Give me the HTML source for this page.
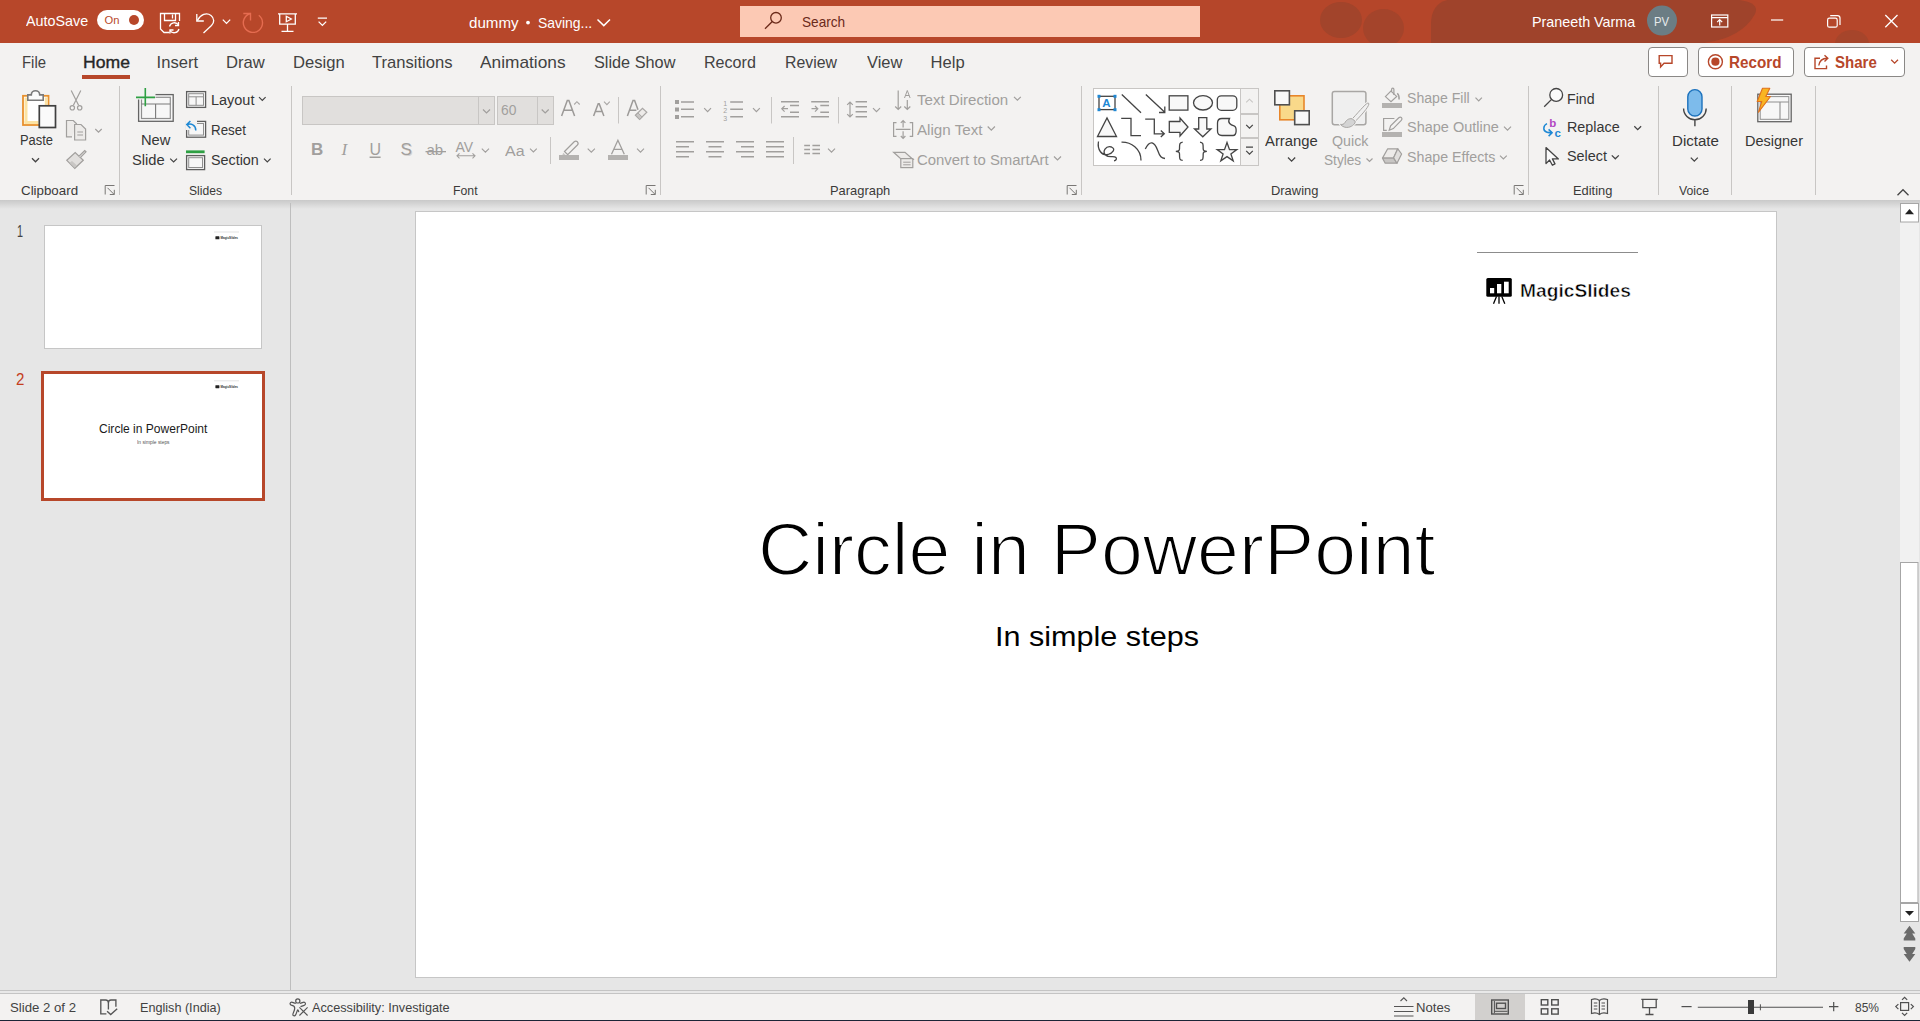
<!DOCTYPE html>
<html><head><meta charset="utf-8">
<style>
html,body{margin:0;padding:0;width:1920px;height:1021px;overflow:hidden;background:#E6E6E6;}
body{position:relative;font-family:"Liberation Sans",sans-serif;}
.t{position:absolute;white-space:nowrap;line-height:1;transform-origin:0 0;}
.r{position:absolute;}
svg.ic{position:absolute;left:0;top:0;}
</style></head><body>
<div class="r" style="left:0;top:0;width:1920px;height:43px;background:#B7472A;overflow:hidden">
  <div class="r" style="left:1200px;top:0;width:720px;height:43px;background:#B5462A"></div>
  <svg class="ic" width="1920" height="43" viewBox="0 0 1920 43" style="left:0;top:0">
    <ellipse cx="1341" cy="20" rx="21" ry="18" fill="#A2442B"/>
    <ellipse cx="1383.5" cy="28" rx="20.5" ry="19" fill="#A4442B"/>
    <path d="M1431 43V24Q1431 1 1453 -1H1722Q1762 -1 1755 14Q1742 38 1704 43Z" fill="#9F432B"/>
    <ellipse cx="1852" cy="44" rx="17" ry="14" fill="#A6452B"/>
  </svg>
</div>
<div class="r" style="left:0;top:43px;width:1920px;height:157px;background:#F3F2F1"></div>
<div class="r" style="left:0;top:200px;width:1920px;height:9px;background:linear-gradient(#C9C9C9,#E6E6E6)"></div>
<div class="r" style="left:0;top:990px;width:1920px;height:31px;background:#F3F2F1"></div>
<svg class="ic" width="1920" height="1021" viewBox="0 0 1920 1021" font-family="Liberation Sans, sans-serif">
<!-- ===== TITLE BAR ===== -->
<rect x="97" y="10" width="47" height="20" rx="10" fill="#fff"/>
<circle cx="134" cy="20" r="5" fill="#B7472A"/>
<g fill="none" stroke="#fff" stroke-width="1.3" stroke-linejoin="miter">
  <!-- save -->
  <path d="M169.5 32.5H164L160.5 29V13.5H179.5V21"/>
  <path d="M164.5 13.5V20.5H175.5V13.5M172.5 14.5V18.5"/>
  <path d="M169.5 26.5A5 5 0 0 1 178.5 25M179 29A5 5 0 0 1 170 30.5"/>
  <path d="M178.5 22V25.5H175M170 33.5V30H173.5"/>
  <!-- undo -->
  <path d="M196.8 14V21H203.8"/>
  <path d="M197.3 20.5C200.5 14.5 206.5 12 211 15.5C214.5 18.3 214.5 22.5 211.5 25.5L203.5 33"/>
  <path d="M222.8 19.6L226.5 23.4L230.2 19.6"/>
  <!-- present -->
  <path d="M278 13.8H297M279.7 13.8V24.2H295.3V13.8M287.5 24.2V31.3M281.5 31.3H293.5"/>
  <path d="M286.3 16.3V21.7L291.3 19Z" />
  <!-- customize -->
  <path d="M317.8 18.2H327M318.6 21.6L322.4 25.4L326.2 21.6"/>
  <!-- title chevron -->
  <circle cx="528" cy="22.6" r="1.9" fill="#fff" stroke="none"/>
  <path d="M597.5 19.5L603.8 25.6L610 19.5" stroke-width="1.5"/>
</g>
<g fill="none" stroke="#E56C50" stroke-width="1.4">
  <path d="M250.5 13.5A9.6 9.6 0 1 0 258.8 15.2"/>
  <path d="M243.3 13.5H250.5V20.5"/>
</g>
<rect x="740" y="6" width="460" height="31" fill="#FCC9B4"/>
<g fill="none" stroke="#6B2A1A" stroke-width="1.3">
  <circle cx="776" cy="17.8" r="5.3"/>
  <path d="M772.3 21.5L765 28.8"/>
</g>
<circle cx="1662" cy="20.6" r="15" fill="#6B7D84"/>
<g fill="none" stroke="#fff" stroke-width="1.2">
  <rect x="1711.6" y="15" width="16.2" height="12"/>
  <path d="M1711.6 17.6H1727.8M1719.7 25.5V19.8M1717.2 22.2L1719.7 19.7L1722.2 22.2"/>
  <path d="M1771 20H1783.2"/>
  <rect x="1827.6" y="18.2" width="9.6" height="9" rx="1.8"/>
  <path d="M1830.2 15.6H1837.5Q1840 15.6 1840 18.1V25"/>
  <path d="M1885.3 15L1897.5 27.3M1897.5 15L1885.3 27.3" stroke-width="1.3"/>
</g>
<!-- ===== TABS ===== -->
<rect x="82" y="75" width="48" height="4" fill="#B7472A"/>
<g fill="#fff" stroke="#8A8886" stroke-width="1">
  <rect x="1648.5" y="47.5" width="39" height="29" rx="3.5"/>
  <rect x="1698.5" y="47.5" width="95" height="29" rx="3.5"/>
  <rect x="1804.5" y="47.5" width="100" height="29" rx="3.5"/>
</g>
<g fill="none" stroke="#B7472A" stroke-width="1.4">
  <path d="M1659.2 55.6H1672V63.3H1664L1660.6 67V63.3H1659.2Z"/>
  <circle cx="1715.4" cy="61.7" r="7"/>
  <path d="M1820 58.2H1815V68.6H1826.5V65.5"/>
  <path d="M1818.8 65.5C1819.5 60.5 1822.5 58.5 1827.3 58.3M1824.5 55.2L1827.8 58.3L1824.5 61.4"/>
  <path d="M1891.2 59.8L1894.6 63.2L1898 59.8" stroke-width="1.3"/>
</g>
<circle cx="1715.4" cy="61.7" r="4.1" fill="#B7472A"/>
<!-- ===== RIBBON ===== -->
<g stroke="#C8C6C4" stroke-width="1">
  <path d="M119.5 86V195M291.5 86V195M660.5 86V195M1081.5 86V195M1528.5 86V195M1658.5 86V195M1731.5 86V195M1815.5 86V195"/>
  <path d="M618.5 97V123.5M550.5 137V164M771.5 97V123.5M838.5 97V123.5M793.5 137V164"/>
</g>
<!-- dialog launchers -->
<g fill="none" stroke="#797775" stroke-width="1">
  <path d="M105.2 194.5V185.5H114.5M107.5 187.8L114 194.3M114.3 189.8V194.5H109.8"/>
  <path d="M646.2 194.5V185.5H655.5M648.5 187.8L655 194.3M655.3 189.8V194.5H650.8"/>
  <path d="M1067.2 194.5V185.5H1076.5M1069.5 187.8L1076 194.3M1076.3 189.8V194.5H1071.8"/>
  <path d="M1514.2 194.5V185.5H1523.5M1516.5 187.8L1523 194.3M1523.3 189.8V194.5H1518.8"/>
</g>
<!-- paste -->
<rect x="23" y="95.8" width="25.5" height="29.2" fill="#FFF" stroke="#E8912D" stroke-width="1.8"/>
<rect x="24.5" y="97.5" width="3" height="26" fill="#FCE3A3"/>
<rect x="24.5" y="121" width="14" height="3" fill="#FCE3A3"/>
<rect x="44.8" y="97.4" width="2.6" height="7.6" fill="#FCE3A3"/>
<path d="M27.8 100.2V94.9H31.3A4.2 4.2 0 0 1 39.7 94.9H43.2V100.2Z" fill="#FBFBFB" stroke="#7A7A7A" stroke-width="1.6"/>
<rect x="39.3" y="105.8" width="16.2" height="21.7" fill="#FAFAFA" stroke="#404040" stroke-width="1.7"/>
<path d="M32 158.3L35.5 161.8L39 158.3" fill="none" stroke="#444" stroke-width="1.3"/>
<!-- scissors -->
<g fill="none" stroke="#A19F9D" stroke-width="1.2">
  <path d="M71.2 90.5L78.6 105.2M80.8 90.5L73.4 105.2"/>
  <circle cx="72.3" cy="107.8" r="2.2"/><circle cx="79.7" cy="107.8" r="2.2"/>
</g>
<!-- copy -->
<g fill="#EDEBE9" stroke="#A19F9D" stroke-width="1.2">
  <path d="M72 136.8H66.5V120.5H73.3L76.8 124"/>
  <path d="M74.6 124.5H81L85.6 129.1V140H74.6Z"/>
</g>
<path d="M77.3 132H83M77.3 135H83" stroke="#A19F9D" stroke-width="1"/>
<path d="M95.3 129L98.5 132.2L101.7 129" fill="none" stroke="#A19F9D" stroke-width="1.2"/>
<!-- format painter -->
<g stroke="#A19F9D" stroke-width="1.2" fill="#E1DFDD">
  <path d="M66.8 160.3L75.2 152.6L83.3 160.2L74.8 168.3Z"/>
  <path d="M79 156.2L84.7 150.5L86 151.8L80.3 157.6"/>
</g>
<path d="M69.5 162.8L74.8 167.8L77 165.6L72 161Z" fill="#C8C6C4"/>
<!-- new slide -->
<g fill="#F7F7F7" stroke="#646464" stroke-width="1.3">
  <rect x="138.6" y="94.6" width="34.6" height="26.7"/>
</g>
<g fill="#F7F7F7" stroke="#8F8F8F" stroke-width="1.2">
  <rect x="141.5" y="97.3" width="28.8" height="21.2"/>
</g>
<path d="M141.5 104H170.3M155.6 104V118.5" stroke="#7a7a7a" stroke-width="1.1" fill="none"/>
<rect x="136" y="88" width="19.5" height="11.5" fill="#F3F2F1"/>
<path d="M136 97.4H155M145.3 88V106.3" stroke="#2EA043" stroke-width="1.6" fill="none"/>
<path d="M170.2 158.6L173.6 162L177 158.6" fill="none" stroke="#444" stroke-width="1.2"/>
<!-- layout / reset / section -->
<g fill="#F7F7F7" stroke="#5E5E5E" stroke-width="1.3">
  <rect x="186.6" y="91.6" width="19" height="15.8"/>
  <rect x="186.6" y="121.4" width="19" height="15.8"/>
  <rect x="186.6" y="155.6" width="18" height="14"/>
</g>
<g fill="none" stroke="#8F8F8F" stroke-width="1">
  <rect x="188.7" y="93.7" width="14.8" height="11.6"/>
  <path d="M188.7 96.8H203.5M196.1 96.8V105.3"/>
  <rect x="188.7" y="123.5" width="14.8" height="11.6"/>
  <rect x="188.7" y="157.7" width="13.8" height="9.8"/>
</g>
<rect x="186" y="150.4" width="18.6" height="2.8" fill="#2EA043"/>
<rect x="186" y="120" width="11" height="10" fill="#F3F2F1"/>
<path d="M187 124.6C191 123.2 195.8 124.5 195.8 130.6M190.4 120.9L186.8 124.6L190.4 128.2" fill="none" stroke="#1E88D4" stroke-width="1.5"/>
<g fill="none" stroke="#444" stroke-width="1.2">
  <path d="M259 97.2L262.3 100.5L265.6 97.2M264 158.7L267.3 162L270.6 158.7"/>
</g>
<!-- font boxes -->
<g fill="#E1DFDD" stroke="#C8C6C4" stroke-width="1">
  <rect x="302.5" y="96.5" width="192" height="28"/>
  <rect x="497.5" y="96.5" width="56" height="28"/>
</g>
<path d="M478.5 97V124M537.5 97V124" stroke="#C8C6C4"/>
<g fill="none" stroke="#A19F9D" stroke-width="1.2">
  <path d="M483 109.5L486.5 113L490 109.5M541.7 109.5L545.2 113L548.7 109.5"/>
</g>
<g fill="none" stroke="#9C9A98" stroke-width="1.5">
  <path d="M561.6 116L567.3 100.6H568.9L574.6 116M563.7 110.3H572.4"/>
  <path d="M593.6 116L598.2 103.8H599.2L603.9 116M595.4 111.5H602.1"/>
  <path d="M627.4 116L633 100.6H634.6L638 109.8M629.6 110.2H636.4"/>
</g>
<g fill="none" stroke="#A9A7A5" stroke-width="1.1">
  <path d="M574.2 104.5L576.9 101.7L579.7 104.5M604 101.7L606.9 104.6L609.8 101.7"/>
</g>
<path d="M635.4 115.2L642.5 108.3L646.8 112.3L639.6 119.4Z" fill="#EDEBE9" stroke="#A9A7A5" stroke-width="1.2"/>
<path d="M635.6 115.2L638 112.9L642.2 117L639.6 119.4Z" fill="#C8C6C4" stroke="#A9A7A5" stroke-width="1"/>
<g fill="#A19F9D">
  <text x="311" y="154.8" font-size="17" font-weight="bold">B</text>
  <text x="341.5" y="154.8" font-size="17" font-style="italic" font-family="Liberation Serif">I</text>
  <text x="369.5" y="154.5" font-size="16">U</text>
  <rect x="369.6" y="156.5" width="11" height="1.5"/>
  <text x="401.5" y="156" font-size="17" fill="#D6D4D2">S</text>
  <text x="400.5" y="155" font-size="17">S</text>
  <text x="426.5" y="155" font-size="15">ab</text>
  <rect x="425.5" y="151" width="20.5" height="1.3"/>
  <text x="455.5" y="151.5" font-size="14">AV</text>
</g>
<g fill="none" stroke="#A19F9D" stroke-width="1.1">
  <path d="M457 155.8H475M459.5 153.3L457 155.8L459.5 158.3M472.5 153.3L475 155.8L472.5 158.3"/>
  <path d="M481.8 148.6L485.4 152.2L489 148.6M530 148.6L533.4 152L536.8 148.6M587.7 148.6L591.3 152.2L594.9 148.6M637 148.6L640.5 152.1L644 148.6"/>
  <path d="M611.5 154.2L617.9 140.3L624.3 154.2M613.8 149.4H622" stroke-width="1.3"/>
  <path d="M564.5 151.5L574.2 141.8Q575.8 140.3 577.4 141.8Q578.9 143.4 577.4 145L567.7 154.6Z" stroke-width="1.2"/>
</g>
<path d="M563.3 152.8L566.3 155.8L561.5 157Z" fill="#C8C6C4"/>
<rect x="559" y="155" width="20" height="5" fill="#B4B2B0"/>
<rect x="608" y="155" width="20" height="5" fill="#B4B2B0"/>
<!-- paragraph -->
<g fill="#A19F9D">
  <rect x="675" y="100" width="4" height="4"/><rect x="675" y="107.5" width="4" height="4"/><rect x="675" y="115" width="4" height="4"/>
  <text x="723.2" y="105.5" font-size="7">1</text>
  <text x="723.2" y="113" font-size="7">2</text>
  <text x="723.2" y="120.5" font-size="7">3</text>
</g>
<g fill="none" stroke="#A19F9D" stroke-width="1.6">
  <path d="M681 102H694M681 109.3H694M681 116.7H694"/>
  <path d="M730.2 102H743M730.2 109.3H743M730.2 116.7H743"/>
  <path d="M781 101.8H799M790 105.5H799M790 112.2H799M781 116.7H799"/>
  <path d="M811.2 101.8H829M820.3 105.5H829M820.3 112.2H829M811.2 116.7H829"/>
  <path d="M855.6 101.8H867M855.6 106.8H867M855.6 111.8H867M855.6 116.7H867"/>
  <path d="M676 141.8H694M676 146.7H689M676 151.8H694M676 156.7H689"/>
  <path d="M706 141.8H724M708.5 146.7H721.5M706 151.8H724M708.5 156.7H721.5"/>
  <path d="M736 141.8H754M741 146.7H754M736 151.8H754M741 156.7H754"/>
  <path d="M766 141.8H784M766 146.7H784M766 151.8H784M766 156.7H784"/>
  <path d="M804.2 145.5H810M812.4 145.5H820M804.2 149.5H810M812.4 149.5H820M804.2 153.5H810M812.4 153.5H820" stroke-width="1.3"/>
</g>
<g fill="none" stroke="#A19F9D" stroke-width="1.2">
  <path d="M788 108.7H781.8M784.6 106L781.8 108.8L784.6 111.6"/>
  <path d="M811.5 108.7H817.8M815 106L817.8 108.8L815 111.6"/>
  <path d="M850 102V117M847.2 104.8L850 102L852.8 104.8M847.2 114.2L850 117L852.8 114.2"/>
  <path d="M704.2 108.2L707.6 111.6L711 108.2M753 108.2L756.4 111.6L759.8 108.2M873 108.2L876.5 111.7L880 108.2M828 148.6L831.5 152.1L835 148.6"/>
</g>
<!-- text direction / align / convert -->
<g fill="none" stroke="#A19F9D" stroke-width="1.2">
  <path d="M898.2 90.5V109.5M895.2 106.5L898.2 109.5L901.2 106.5"/>
  <path d="M907.3 100V109.5M904.3 106.5L907.3 109.5L910.3 106.5"/>
  <path d="M904.5 98L907.3 90.5L910.1 98M905.5 95.5H909.1" stroke-width="1"/>
  <path d="M1014 96.8L1017.4 100.2L1020.8 96.8"/>
  <path d="M896.5 122.6H893.6V136.3H896.5M909.7 122.6H912.6V136.3H909.7M895.8 129.3H910.5"/>
  <path d="M903.1 120.5V127.6M900.8 122.8L903.1 120.5L905.4 122.8M903.1 131.2V138.3M900.8 136L903.1 138.3L905.4 136"/>
  <path d="M987.7 126.5L991.3 130.1L994.9 126.5M1054 156.5L1057.5 160L1061 156.5"/>
</g>
<g fill="#EDEBE9" stroke="#A19F9D" stroke-width="1.2">
  <path d="M893.6 152.3H905L913 159.5H901.5Z"/>
  <rect x="900.8" y="158.6" width="12" height="9"/>
</g>
<path d="M903.2 162.2H910.6M903.2 164.8H910.6" stroke="#A19F9D" stroke-width="1"/>
<!-- shapes gallery -->
<rect x="1093.5" y="88.5" width="165" height="77" fill="#fff" stroke="#C8C6C4"/>
<g fill="#F3F2F1" stroke="#C8C6C4">
  <rect x="1240.5" y="88.5" width="18" height="25"/>
  <rect x="1240.5" y="114.5" width="18" height="23"/>
  <rect x="1240.5" y="138.5" width="18" height="27"/>
</g>
<g fill="none" stroke="#C8C6C4" stroke-width="1.1"><path d="M1246.2 102.4L1249.5 99.2L1252.8 102.4"/></g>
<g fill="none" stroke="#444" stroke-width="1.2">
  <path d="M1246.2 124.8L1249.5 128.1L1252.8 124.8M1246.2 150.8L1249.5 154.1L1252.8 150.8M1246 147.2H1253"/>
</g>
<g fill="none" stroke="#444" stroke-width="1.3">
  <rect x="1099" y="96.3" width="16" height="13.3"/>
  <path d="M1121.8 94.5L1141 112.8"/>
  <path d="M1145.8 94.5L1164.8 112.2M1164.8 106.5V112.5H1159"/>
  <rect x="1169.2" y="95.8" width="18.7" height="14.3" fill="#F8F8F8"/>
  <ellipse cx="1203" cy="102.8" rx="9.5" ry="7.2" fill="#F8F8F8"/>
  <rect x="1217.3" y="95.8" width="19.5" height="14.5" rx="4" fill="#F8F8F8"/>
  <path d="M1097.5 136.5L1107 118L1116.5 136.5Z" fill="#F8F8F8"/>
  <path d="M1121.2 118.4H1131V135.7H1141"/>
  <path d="M1145.2 119.2H1154.3V133.8H1164.3M1160.8 130.5L1164.3 133.8L1160.8 137"/>
  <path d="M1169.3 121.5H1180V118L1188 127L1180 136V132.3H1169.3Z" fill="#F8F8F8"/>
  <path d="M1198.7 117.6H1206.8V129L1211 129L1202.8 136.8L1194.5 129L1198.7 129Z" fill="#F8F8F8"/>
  <path d="M1222 118.5H1229.5C1227 123 1231 125 1234 125.8C1237 127 1237 135.5 1233 135.5H1222Q1217.5 135.5 1217.5 131V123Q1217.5 118.5 1222 118.5Z" fill="#F8F8F8"/>
  <path d="M1098.5 141.5C1097 150 1102 156 1108 154.5C1113 153 1116 149 1111.5 147C1106 145.5 1101.5 151.5 1106 155.5C1109 158 1114 155.5 1116 157.5C1117 159 1116 160.5 1114 160.8"/>
  <path d="M1121.5 142.2C1131 142 1141 148.5 1141 160.5"/>
  <path d="M1145.3 149C1150 139.5 1154.5 142 1157.5 150C1160 157 1161.5 158 1165 158.5"/>
  <path d="M1182.7 142.2C1179.5 142.5 1179.5 144 1179.5 149C1179.5 150.5 1178.5 151.3 1175.8 151.3C1178.5 151.3 1179.5 152 1179.5 153.8C1179.5 159 1179.5 160.4 1182.7 160.4"/>
  <path d="M1200 142.2C1203.2 142.5 1203.2 144 1203.2 149C1203.2 150.5 1204.2 151.3 1206.9 151.3C1204.2 151.3 1203.2 152 1203.2 153.8C1203.2 159 1203.2 160.4 1200 160.4"/>
  <path d="M1227 142.5L1229.5 149.6L1236.8 149.6L1230.9 153.9L1233.2 160.9L1227 156.6L1220.8 160.9L1223.1 153.9L1217.2 149.6L1224.5 149.6Z" fill="#F8F8F8"/>
</g>
<g fill="#1E88D4">
  <rect x="1097.5" y="94.8" width="3" height="3"/><rect x="1113.5" y="94.8" width="3" height="3"/>
  <rect x="1097.5" y="108.2" width="3" height="3"/><rect x="1113.5" y="108.2" width="3" height="3"/>
  <text x="1102.2" y="107.2" font-size="11.5" font-weight="bold">A</text>
</g>
<!-- arrange -->
<rect x="1279.8" y="95.8" width="24.2" height="24" fill="#F9D98A" stroke="#E8862A" stroke-width="1.6"/>
<rect x="1274.8" y="90.8" width="14.6" height="14" fill="#F8F8F8" stroke="#505050" stroke-width="1.6"/>
<rect x="1294.7" y="110.8" width="14.5" height="13.8" fill="#F8F8F8" stroke="#505050" stroke-width="1.6"/>
<path d="M1288 157.5L1291.6 161.1L1295.2 157.5" fill="none" stroke="#444" stroke-width="1.3"/>
<!-- quick styles -->
<rect x="1332.3" y="91.4" width="33.6" height="33.4" rx="2.2" fill="#EFEFEF" stroke="#A8A6A4" stroke-width="1.5"/>
<path d="M1368.6 103.2C1370.2 104.8 1364 112.5 1355.4 121.2L1352.5 118.6C1360.5 110 1367 101.8 1368.6 103.2Z" fill="#F0F0F0" stroke="#F3F2F1" stroke-width="3"/>
<path d="M1368.6 103.2C1370.2 104.8 1364 112.5 1355.4 121.2L1352.5 118.6C1360.5 110 1367 101.8 1368.6 103.2Z" fill="#F0F0F0" stroke="#A8A6A4" stroke-width="1"/>
<path d="M1352.2 118.8C1348.5 118 1346 120.5 1344.8 122.8C1344 124.2 1342.5 124.6 1340.5 124.4C1342.5 127 1345.5 127.8 1348.5 127.3C1352.5 126.5 1355.5 123.5 1355.2 121.3Z" fill="#D4D4D4" stroke="#F3F2F1" stroke-width="2.4"/>
<path d="M1352.2 118.8C1348.5 118 1346 120.5 1344.8 122.8C1344 124.2 1342.5 124.6 1340.5 124.4C1342.5 127 1345.5 127.8 1348.5 127.3C1352.5 126.5 1355.5 123.5 1355.2 121.3Z" fill="#D4D4D4" stroke="#A8A6A4" stroke-width="1"/>
<path d="M1366.5 158.5L1369.5 161.5L1372.5 158.5" fill="none" stroke="#A19F9D" stroke-width="1.2"/>
<!-- shape fill/outline/effects -->
<g fill="none" stroke="#A19F9D" stroke-width="1.2">
  <path d="M1385.4 96.6L1390.9 91L1396.7 96.4L1391 101.8Z" fill="#F3F2F1"/>
  <path d="M1391.6 91.5V89.4C1391.6 87.7 1393.9 87.7 1393.9 89.4V95"/>
  <path d="M1397.3 93.2C1398.8 94.5 1399.2 96.5 1399.1 99.5" stroke-width="1.5"/>
  <path d="M1394.4 118.5H1383.6V130.3H1386.8"/>
  <path d="M1389.2 130.2L1390.6 125.8L1398.8 117.7Q1400.3 116.5 1401.5 117.7Q1402.6 119 1401.3 120.3L1393.3 128.6Z"/>
  <path d="M1475.5 97.6L1478.7 100.8L1481.9 97.6M1504 126.6L1507.5 130.1L1511 126.6M1500 155.6L1503.4 159L1506.8 155.6"/>
</g>
<rect x="1382" y="103" width="20" height="5" fill="#B4B2B0"/>
<rect x="1382" y="132" width="20" height="5" fill="#B4B2B0"/>
<g stroke="#A19F9D" stroke-width="1.2" stroke-linejoin="round">
  <path d="M1382.5 158.1L1387.7 148.8H1397.8L1393.6 157.8Z" fill="#EDEBE9"/>
  <path d="M1382.5 158.1H1393.6L1397 163.2H1385.2Z" fill="#C8C6C4"/>
  <path d="M1393.6 157.8L1397.8 148.8L1401.6 154L1397 163.2Z" fill="#E1DFDD"/>
</g>
<!-- find / replace / select -->
<g fill="none" stroke="#444" stroke-width="1.3">
  <circle cx="1556.2" cy="94.9" r="6.4" fill="#FAFAFA"/>
  <path d="M1551.6 99.4L1544.2 106.8"/>
  <path d="M1546 147.6V163.6L1549.6 160L1552.4 165.2L1555 163.9L1552.4 158.9H1558.4Z" fill="#FAFAFA" stroke-linejoin="round"/>
  <path d="M1634.3 126.3L1637.7 129.7L1641.1 126.3M1611.8 155.4L1615.3 158.8L1618.8 155.4"/>
</g>
<path d="M1547 123.6C1543 125.5 1542.5 131 1547 132.2C1548.5 132.6 1550.5 132.7 1552.2 132.7M1548.6 129.4L1552.1 132.7L1548.6 136.1" fill="none" stroke="#1E88D4" stroke-width="1.5"/>
<text x="1549.2" y="126.6" font-size="11.5" font-weight="bold" fill="#B146C2">b</text>
<text x="1554.6" y="136.8" font-size="11.5" font-weight="bold" fill="#1E88D4">c</text>
<!-- mic -->
<rect x="1687.8" y="89.6" width="14.2" height="26.4" rx="7.1" fill="#7DBBEB" stroke="#1C72BD" stroke-width="1.4"/>
<path d="M1683.6 108.5A11.3 11.3 0 0 0 1706.2 108.5M1694.9 119.8V126.2" fill="none" stroke="#444" stroke-width="1.4"/>
<path d="M1690.8 157.6L1694.3 161.1L1697.8 157.6" fill="none" stroke="#444" stroke-width="1.3"/>
<!-- designer -->
<rect x="1757.8" y="94.2" width="33.4" height="27.5" fill="#F7F7F7" stroke="#646464" stroke-width="1.3"/>
<rect x="1760.2" y="96.6" width="28.6" height="22.7" fill="none" stroke="#8F8F8F" stroke-width="1"/>
<path d="M1760.2 102H1788.8M1780 102V119.3" stroke="#8F8F8F" stroke-width="1.1"/>
<path d="M1762.5 88.2H1769.8L1765.8 96.5H1770.5L1758.5 112.2L1761.8 101.5H1757.2Z" fill="#F8B522" stroke="#E0701B" stroke-width="1.1" stroke-linejoin="round"/>
<path d="M1897.5 195.2L1903 189.7L1908.5 195.2" fill="none" stroke="#444" stroke-width="1.3"/>
<!-- ===== SLIDE PANE ===== -->
<path d="M290.5 203V990" stroke="#BEBEBE" stroke-width="1"/>
<rect x="44.5" y="225.5" width="217" height="123" fill="#fff" stroke="#C6C6C6"/>
<path d="M214 232H239" stroke="#D0D0D0" stroke-width="0.6"/>
<rect x="215.4" y="236.3" width="4" height="3" rx="0.4" fill="#222"/>
<text x="220.6" y="239.4" font-size="3.9" font-weight="bold" fill="#333" textLength="17.4" lengthAdjust="spacingAndGlyphs">MagicSlides</text>
<rect x="42.5" y="372.5" width="221" height="127" fill="#fff" stroke="#B7472A" stroke-width="3"/>
<path d="M214 380.8H239" stroke="#D0D0D0" stroke-width="0.6"/>
<rect x="215.4" y="385.2" width="4" height="3" rx="0.4" fill="#222"/>
<text x="220.6" y="388.3" font-size="3.9" font-weight="bold" fill="#333" textLength="17.4" lengthAdjust="spacingAndGlyphs">MagicSlides</text>
<!-- ===== MAIN SLIDE ===== -->
<rect x="415.5" y="211.5" width="1361" height="766" fill="#fff" stroke="#C6C6C6"/>
<path d="M1477 252.5H1638" stroke="#8C8C8C" stroke-width="1"/>
<rect x="1486.3" y="278" width="25.5" height="18.8" rx="1.5" fill="#000"/>
<g fill="#fff">
  <rect x="1490" y="288" width="4.2" height="5.3"/>
  <rect x="1497" y="284" width="4.3" height="9.3"/>
  <rect x="1504" y="281.7" width="4.7" height="11.6"/>
</g>
<path d="M1496.5 296.5L1493.5 303.8M1499 296.5V303.8M1501.8 296.5L1504.8 303.8" stroke="#000" stroke-width="1.3"/>
<!-- ===== SCROLLBAR ===== -->
<rect x="1900" y="203" width="19" height="719" fill="#F1F1F1"/>
<g fill="#fff" stroke="#A6A6A6" stroke-width="1">
  <rect x="1900.5" y="203.5" width="18" height="18.5"/>
  <rect x="1900.5" y="562.5" width="17.5" height="340"/>
  <rect x="1900.5" y="903.5" width="18" height="18"/>
</g>
<g fill="#222">
  <path d="M1905 214.3L1909.5 209L1914 214.3Z"/>
  <path d="M1905 911L1909.5 915.8L1914 911Z"/>
</g>
<g fill="#6B6B6B">
  <path d="M1909.5 925.8L1915.3 933.5H1912.2L1915.3 938.5V940.6H1903.7V938.5L1906.8 933.5H1903.7Z"/>
  <path d="M1909.5 961.8L1915.3 954H1912.2L1915.3 949V947H1903.7V949L1906.8 954H1903.7Z"/>
</g>
<!-- ===== STATUS BAR ===== -->
<rect x="0" y="990" width="1920" height="1" fill="#C4C4C4"/>
<rect x="0" y="991" width="1920" height="2" fill="#E8E8E8"/>
<rect x="0" y="993" width="1920" height="1" fill="#C4C4C4"/>
<rect x="0" y="1020" width="1920" height="1" fill="#1B2436"/>
<g fill="none" stroke="#555" stroke-width="1.2">
  <path d="M106.4 1013.9H100.8V1000H105.6Q108.4 1000 108.4 1003V1009.4M108.4 1003Q108.4 1000 111 1000H115.9V1006.8" stroke-width="1.35"/>
  <path d="M107.1 1011.2L110.7 1014.6L117.2 1008.7" stroke-width="1.35"/>
</g>
<g fill="none" stroke="#555" stroke-width="1.1">
  <circle cx="297.8" cy="1000.9" r="2.1" stroke-width="1.2"/>
  <path d="M295.8 1003.4C293.5 1003.4 292.3 1001.4 290.7 1002.4C289.3 1003.4 290.3 1005.1 292 1005.4C294.3 1005.8 294.9 1006.6 294.7 1008.6C294.5 1010.6 293.5 1012.4 292.9 1014.1C292.4 1015.7 294.6 1016.5 295.6 1014.9C296.5 1013.4 296.8 1011.1 297.8 1009.9C298.3 1010 298.6 1011.1 298.8 1012.1M299.8 1003.4C302 1003.4 303.3 1001.4 304.8 1002.4C306 1003.4 305.5 1005.1 303.5 1005.6L300.5 1006.6" stroke-width="1.2"/>
  <path d="M299.4 1007.3L307.6 1015.5M307.6 1007.3L299.4 1015.5"/>
</g>
<g fill="none" stroke="#555" stroke-width="1.1">
  <path d="M1394 1006.5H1413.5M1394 1011.5H1413.5M1394 1016H1413.5M1400.5 1001L1403.8 997.8L1407 1001"/>
</g>
<rect x="1475" y="994" width="50" height="26" fill="#D2D0CE"/>
<g fill="none" stroke="#505050" stroke-width="1.4">
  <rect x="1491.7" y="1000" width="16.6" height="14"/>
  <rect x="1496.5" y="1003.2" width="9" height="5.3"/>
  <path d="M1494.4 1001V1013.2M1494.4 1011.3H1507.5" stroke-width="1"/>
  <rect x="1541.3" y="999.7" width="6.5" height="5.3"/>
  <rect x="1551.7" y="999.7" width="6.5" height="5.3"/>
  <rect x="1541.3" y="1008.8" width="6.5" height="5.3"/>
  <rect x="1551.7" y="1008.8" width="6.5" height="5.3"/>
  <path d="M1591.5 999.5V1013.5C1594.5 1012.5 1597 1012.5 1599.4 1014.5C1601.8 1012.5 1604.5 1012.5 1607.5 1013.5V999.5C1604.5 998.5 1601.8 998.5 1599.4 1000.5C1597 998.5 1594.5 998.5 1591.5 999.5ZM1599.4 1000.5V1014.5" stroke-width="1.2"/>
  <path d="M1593.8 1003H1597.3M1593.8 1006H1597.3M1593.8 1009H1597.3M1601.5 1003H1605M1601.5 1006H1605M1601.5 1009H1605" stroke-width="1"/>
  <path d="M1641.3 999.3H1657.7M1642.8 999.3V1007.6H1656.2V999.3M1649.5 1007.6V1014.5M1645.5 1014.5H1653.5" stroke-width="1.3"/>
  <path d="M1681.5 1006.6H1691.6" stroke-width="1.2"/>
  <path d="M1829 1006.6H1838.4M1833.7 1002V1011.2" stroke-width="1.2"/>
</g>
<path d="M1697.8 1007.3H1823" stroke="#505050" stroke-width="1.1"/>
<path d="M1760.4 1004.3V1010.3" stroke="#505050" stroke-width="1"/>
<rect x="1748" y="1000" width="6" height="14" fill="#3A3A3A"/>
<g fill="none" stroke="#505050" stroke-width="1.2">
  <rect x="1900.6" y="1002.6" width="8" height="7.8"/>
  <path d="M1902 999.9L1904.6 997.3L1907.2 999.9M1902 1012.8L1904.6 1015.4L1907.2 1012.8M1898.4 1004.1L1895.8 1006.6L1898.4 1009.1M1910.8 1004.1L1913.4 1006.6L1910.8 1009.1"/>
</g>
</svg>

<div class="t" style="left:26.40px;top:13.30px;font-size:15px;color:#ffffff;transform:scaleX(0.9563);">AutoSave</div><div class="t" style="left:104.60px;top:15.12px;font-size:11.2px;color:#B7472A;">On</div><div class="t" style="left:469.00px;top:15.30px;font-size:15px;color:#ffffff;transform:scaleX(1.0087);">dummy</div><div class="t" style="left:537.50px;top:15.30px;font-size:15px;color:#ffffff;transform:scaleX(0.9287);">Saving...</div><div class="t" style="left:801.70px;top:14.30px;font-size:15px;color:#6B2A1A;transform:scaleX(0.9069);">Search</div><div class="t" style="left:1531.80px;top:13.90px;font-size:15px;color:#ffffff;transform:scaleX(0.9546);">Praneeth Varma</div><div class="t" style="left:1653.70px;top:15.00px;font-size:13px;color:#E6EAEC;transform:scaleX(0.8707);">PV</div><div class="t" style="left:21.50px;top:54.75px;font-size:16.6px;color:#424242;transform:scaleX(0.8973);">File</div><div class="t" style="left:82.50px;top:54.75px;font-size:16.6px;color:#262626;transform:scaleX(1.0615);-webkit-text-stroke:0.35px #262626;">Home</div><div class="t" style="left:156.60px;top:54.75px;font-size:16.6px;color:#424242;">Insert</div><div class="t" style="left:226.00px;top:54.75px;font-size:16.6px;color:#424242;">Draw</div><div class="t" style="left:293.00px;top:54.75px;font-size:16.6px;color:#424242;">Design</div><div class="t" style="left:372.00px;top:54.75px;font-size:16.6px;color:#424242;">Transitions</div><div class="t" style="left:480.40px;top:54.75px;font-size:16.6px;color:#424242;transform:scaleX(1.0425);">Animations</div><div class="t" style="left:593.60px;top:54.75px;font-size:16.6px;color:#424242;transform:scaleX(0.9802);">Slide Show</div><div class="t" style="left:703.60px;top:54.75px;font-size:16.6px;color:#424242;transform:scaleX(0.9699);">Record</div><div class="t" style="left:785.00px;top:54.75px;font-size:16.6px;color:#424242;transform:scaleX(0.9554);">Review</div><div class="t" style="left:866.60px;top:54.75px;font-size:16.6px;color:#424242;transform:scaleX(0.9922);">View</div><div class="t" style="left:930.50px;top:54.75px;font-size:16.6px;color:#424242;">Help</div><div class="t" style="left:1729.00px;top:54.23px;font-size:16.5px;color:#B7472A;font-weight:bold;transform:scaleX(0.9236);">Record</div><div class="t" style="left:1834.70px;top:54.23px;font-size:16.5px;color:#B7472A;font-weight:bold;transform:scaleX(0.9115);">Share</div><div class="t" style="left:19.60px;top:132.48px;font-size:15.5px;color:#363636;transform:scaleX(0.8326);">Paste</div><div class="t" style="left:141.40px;top:132.48px;font-size:15.5px;color:#363636;transform:scaleX(0.9482);">New</div><div class="t" style="left:132.00px;top:152.18px;font-size:15.5px;color:#363636;transform:scaleX(0.9488);">Slide</div><div class="t" style="left:210.60px;top:92.48px;font-size:15.5px;color:#363636;transform:scaleX(0.9327);">Layout</div><div class="t" style="left:210.60px;top:122.18px;font-size:15.5px;color:#363636;transform:scaleX(0.8620);">Reset</div><div class="t" style="left:210.60px;top:152.18px;font-size:15.5px;color:#363636;transform:scaleX(0.9246);">Section</div><div class="t" style="left:500.60px;top:102.48px;font-size:15.5px;color:#A19F9D;transform:scaleX(0.8933);">60</div><div class="t" style="left:505.00px;top:142.98px;font-size:15.5px;color:#A19F9D;transform:scaleX(1.0286);">Aa</div><div class="t" style="left:917.30px;top:92.48px;font-size:15.5px;color:#A19F9D;transform:scaleX(0.9714);">Text Direction</div><div class="t" style="left:917.30px;top:122.18px;font-size:15.5px;color:#A19F9D;transform:scaleX(0.9788);">Align Text</div><div class="t" style="left:917.30px;top:152.18px;font-size:15.5px;color:#A19F9D;transform:scaleX(0.9617);">Convert to SmartArt</div><div class="t" style="left:1265.00px;top:132.88px;font-size:15.5px;color:#363636;transform:scaleX(0.9558);">Arrange</div><div class="t" style="left:1331.60px;top:132.88px;font-size:15.5px;color:#A19F9D;transform:scaleX(0.9187);">Quick</div><div class="t" style="left:1323.50px;top:152.18px;font-size:15.5px;color:#A19F9D;transform:scaleX(0.8813);">Styles</div><div class="t" style="left:1406.70px;top:90.08px;font-size:15.5px;color:#A19F9D;transform:scaleX(0.9097);">Shape Fill</div><div class="t" style="left:1406.70px;top:119.48px;font-size:15.5px;color:#A19F9D;transform:scaleX(0.9345);">Shape Outline</div><div class="t" style="left:1406.70px;top:148.78px;font-size:15.5px;color:#A19F9D;transform:scaleX(0.9177);">Shape Effects</div><div class="t" style="left:1567.00px;top:90.78px;font-size:15.5px;color:#363636;transform:scaleX(0.9121);">Find</div><div class="t" style="left:1567.00px;top:119.48px;font-size:15.5px;color:#363636;transform:scaleX(0.9250);">Replace</div><div class="t" style="left:1567.00px;top:148.48px;font-size:15.5px;color:#363636;transform:scaleX(0.9286);">Select</div><div class="t" style="left:1671.50px;top:132.68px;font-size:15.5px;color:#363636;transform:scaleX(0.9722);">Dictate</div><div class="t" style="left:1744.70px;top:132.68px;font-size:15.5px;color:#363636;transform:scaleX(0.9351);">Designer</div><div class="t" style="left:20.60px;top:183.83px;font-size:13.2px;color:#3B3A39;transform:scaleX(1.0107);">Clipboard</div><div class="t" style="left:188.60px;top:183.83px;font-size:13.2px;color:#3B3A39;transform:scaleX(0.9179);">Slides</div><div class="t" style="left:453.40px;top:183.83px;font-size:13.2px;color:#3B3A39;transform:scaleX(0.9315);">Font</div><div class="t" style="left:830.20px;top:183.83px;font-size:13.2px;color:#3B3A39;transform:scaleX(0.9783);">Paragraph</div><div class="t" style="left:1271.00px;top:183.83px;font-size:13.2px;color:#3B3A39;transform:scaleX(0.9790);">Drawing</div><div class="t" style="left:1573.00px;top:183.83px;font-size:13.2px;color:#3B3A39;transform:scaleX(0.9762);">Editing</div><div class="t" style="left:1679.00px;top:183.83px;font-size:13.2px;color:#3B3A39;transform:scaleX(0.9291);">Voice</div><div class="t" style="left:16.60px;top:222.61px;font-size:17px;color:#444444;transform:scaleX(0.6347);">1</div><div class="t" style="left:15.80px;top:371.41px;font-size:17px;color:#C43E1C;transform:scaleX(0.8886);">2</div><div class="t" style="left:98.60px;top:422.59px;font-size:12.3px;color:#1a1a1a;transform:scaleX(0.9789);">Circle in PowerPoint</div><div class="t" style="left:136.80px;top:440.61px;font-size:4.6px;color:#555;transform:scaleX(1.0627);">In simple steps</div><div class="t" style="left:757.50px;top:513.36px;font-size:74px;color:#000;transform:scaleX(1.0169);-webkit-text-stroke:1.8px #fff;">Circle in PowerPoint</div><div class="t" style="left:994.50px;top:622.61px;font-size:27.4px;color:#000;transform:scaleX(1.1164);">In simple steps</div><div class="t" style="left:1520.40px;top:281.42px;font-size:19px;color:#000;font-weight:bold;transform:scaleX(1.0099);-webkit-text-stroke:0.5px #fff;">MagicSlides</div><div class="t" style="left:10.00px;top:1001.30px;font-size:13px;color:#424242;transform:scaleX(1.0148);">Slide 2 of 2</div><div class="t" style="left:140.00px;top:1001.30px;font-size:13px;color:#424242;transform:scaleX(0.9712);">English (India)</div><div class="t" style="left:311.70px;top:1001.30px;font-size:13px;color:#424242;transform:scaleX(0.9767);">Accessibility: Investigate</div><div class="t" style="left:1416.00px;top:1001.30px;font-size:13px;color:#424242;transform:scaleX(1.0101);">Notes</div><div class="t" style="left:1855.30px;top:1001.30px;font-size:13px;color:#424242;transform:scaleX(0.9224);">85%</div>
</body></html>
